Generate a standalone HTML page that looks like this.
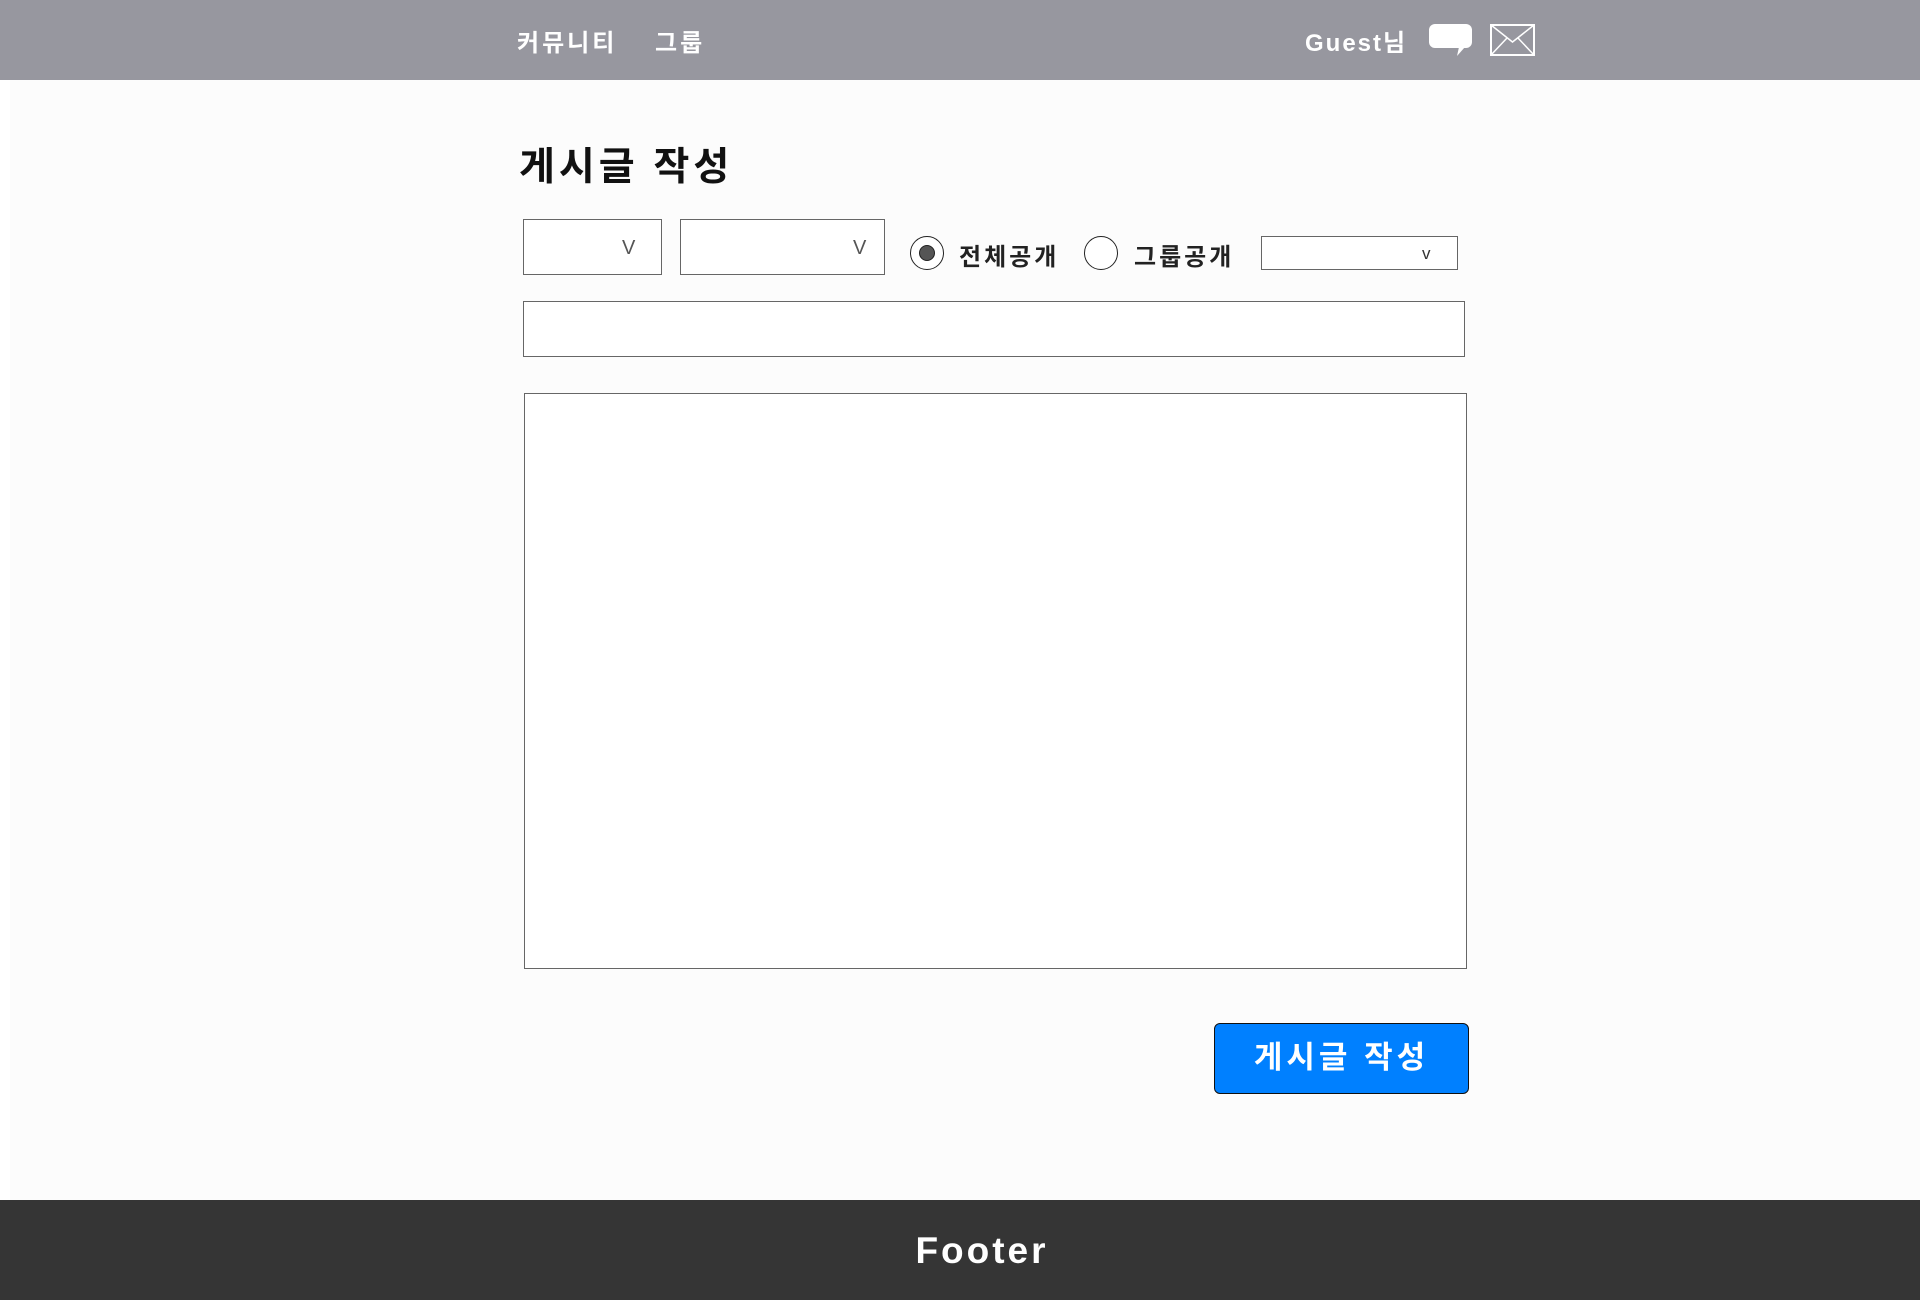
<!DOCTYPE html>
<html><head><meta charset="utf-8"><style>
*{margin:0;padding:0;box-sizing:border-box}
body{width:1920px;height:1300px;position:relative;background:#fff;font-family:"Liberation Sans","Noto Sans CJK KR",sans-serif;overflow:hidden}
.a{position:absolute}
.hdr{left:0;top:0;width:1920px;height:80px;background:#97979f}
.nav{color:#fff;font-weight:bold;font-size:24px;letter-spacing:3px;top:23px}
.main{left:10px;top:80px;width:1910px;height:1120px;background:#fcfcfc}
.box{border:1px solid #666;background:#fff}
.v{color:#555;font-size:20px}
.lbl{font-weight:bold;font-size:24px;letter-spacing:3px;color:#222;top:237px}
.ft{left:0;top:1200px;width:1920px;height:100px;background:#353535}
</style></head><body>
<div class="a hdr"></div>
<div class="a nav" style="left:517px">커뮤니티</div>
<div class="a nav" style="left:655px">그룹</div>
<div class="a nav" style="left:1305px;letter-spacing:2px">Guest님</div>
<svg class="a" style="left:1429px;top:24px" width="44" height="32" viewBox="0 0 44 32"><rect x="0" y="0" width="43" height="24" rx="6" fill="#fff"/><path d="M30 23 L28 32 L36 23Z" fill="#fff"/></svg>
<svg class="a" style="left:1490px;top:24px" width="45" height="32" viewBox="0 0 45 32"><rect x="1" y="1" width="43" height="30" fill="none" stroke="#fff" stroke-width="2"/><path d="M1 1 L22.5 18 L44 1 M1 31 L17 14 M44 31 L28 14" fill="none" stroke="#fff" stroke-width="1.5"/></svg>
<div class="a main"></div>
<div class="a" style="left:519px;top:136px;font-size:39px;font-weight:bold;letter-spacing:4px;color:#111">게시글 작성</div>
<div class="a box" style="left:523px;top:219px;width:139px;height:56px"><span class="a v" style="left:98px;top:17px">V</span></div>
<div class="a box" style="left:680px;top:219px;width:205px;height:56px"><span class="a v" style="left:172px;top:17px">V</span></div>
<div class="a" style="left:910px;top:236px;width:34px;height:34px;border:1px solid #222;border-radius:50%;background:#fff"><div class="a" style="left:8px;top:8px;width:16px;height:16px;border-radius:50%;background:#555;border:1px solid #222"></div></div>
<div class="a lbl" style="left:959px">전체공개</div>
<div class="a" style="left:1084px;top:236px;width:34px;height:34px;border:1px solid #222;border-radius:50%;background:#fff"></div>
<div class="a lbl" style="left:1134px">그룹공개</div>
<div class="a box" style="left:1261px;top:236px;width:197px;height:34px"><span class="a" style="left:160px;top:7px;font-size:17px;color:#333">v</span></div>
<div class="a box" style="left:523px;top:301px;width:942px;height:56px"></div>
<div class="a box" style="left:524px;top:393px;width:943px;height:576px"></div>
<div class="a" style="left:1214px;top:1023px;width:255px;height:71px;background:#0080ff;border:1.5px solid #111;border-radius:6px;color:#fff;font-weight:bold;font-size:31px;letter-spacing:4px;text-align:center;line-height:68px">게시글 작성</div>
<div class="a ft"></div>
<div class="a" style="left:0;top:1230px;width:1964px;text-align:center;color:#fff;font-weight:bold;font-size:37px;letter-spacing:3px">Footer</div>
</body></html>
